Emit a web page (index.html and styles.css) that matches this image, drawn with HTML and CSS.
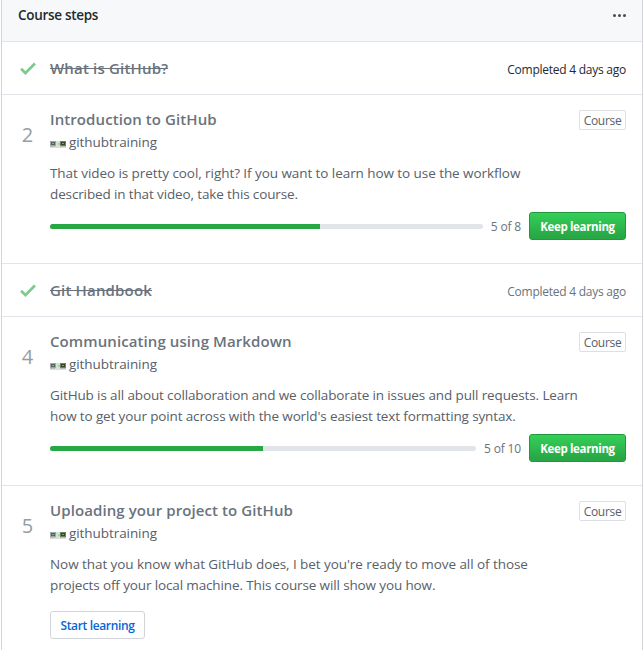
FILE: index.html
```html
<!DOCTYPE html>
<html lang="en">
<head>
<meta charset="utf-8">
<title>Course steps</title>
<link rel="stylesheet" href="styles.css">
</head>
<body>
<svg class="defs" width="0" height="0" aria-hidden="true">
  <symbol id="check" viewBox="0 0 12 16"><path fill-rule="evenodd" d="M12 5l-8 8-4-4 1.500-1.500L4 10l6.500-6.500L12 5z"/></symbol>
  <symbol id="glasses" viewBox="0 0 16 7">
    <path fill="#d9dfda" d="M0 0h16v7H0z"/>
    <path fill="#a0a6a3" d="M0 0h6v5H0z"/>
    <path fill="#59615e" d="M1 1h4v3H1z"/>
    <path fill="#99a49f" d="M2 2h2v1H2z"/>
    <path fill="#c1ebe1" d="M6 0h3v3H6z"/>
    <path fill="#acd591" d="M8 2h2v2H8z"/>
    <path fill="#71805d" d="M10 0h6v5h-6z"/>
    <path fill="#39442d" d="M11 1h4v3h-4z"/>
    <path fill="#909b78" d="M12 2h2v1h-2z"/>
    <path fill="#b8bfb8" d="M0 5h5v1H0zM10 5h6v1h-6z"/>
  </symbol>
</svg>
<main class="box">
  <header class="box-header">
    <h1 class="box-title">Course steps</h1>
    <svg class="kebab" width="13" height="3" viewBox="0 0 13 3"><circle cx="1.500" cy="1.500" r="1.500"/><circle cx="6.500" cy="1.500" r="1.500"/><circle cx="11.500" cy="1.500" r="1.500"/></svg>
  </header>

  <section class="row row-done">
    <svg class="check" width="16" height="21"><use href="#check"/></svg>
    <h2 class="title title-done">What is GitHub?</h2>
    <span class="completed completed-dark">Completed 4 days ago</span>
  </section>

  <section class="row">
    <div class="number">2</div>
    <div class="content">
      <div class="top"><h2 class="title">Introduction to GitHub</h2><span class="label">Course</span></div>
      <div class="owner"><svg class="avatar" width="16" height="7"><use href="#glasses"/></svg><span>githubtraining</span></div>
      <p class="description"><span class="loose">That video is pretty cool, right? If you want to learn how to use the workflow</span><br>described in that video, take this course.</p>
      <div class="progress-row"><div class="progress"><div class="bar" style="width:62.5%"></div></div><span class="count">5 of 8</span><button class="btn btn-primary">Keep learning</button></div>
    </div>
  </section>

  <section class="row row-done">
    <svg class="check" width="16" height="21"><use href="#check"/></svg>
    <h2 class="title title-done">Git Handbook</h2>
    <span class="completed">Completed 4 days ago</span>
  </section>

  <section class="row">
    <div class="number">4</div>
    <div class="content">
      <div class="top"><h2 class="title">Communicating using Markdown</h2><span class="label">Course</span></div>
      <div class="owner"><svg class="avatar" width="16" height="7"><use href="#glasses"/></svg><span>githubtraining</span></div>
      <p class="description">GitHub is all about collaboration and we collaborate in issues and pull requests. Learn<br>how to get your point across with the world's easiest text formatting syntax.</p>
      <div class="progress-row"><div class="progress"><div class="bar" style="width:50%"></div></div><span class="count">5 of 10</span><button class="btn btn-primary">Keep learning</button></div>
    </div>
  </section>

  <section class="row row-last">
    <div class="number">5</div>
    <div class="content">
      <div class="top"><h2 class="title">Uploading your project to GitHub</h2><span class="label">Course</span></div>
      <div class="owner"><svg class="avatar" width="16" height="7"><use href="#glasses"/></svg><span>githubtraining</span></div>
      <p class="description"><span class="loose">Now that you know what GitHub does, I bet you're ready to move all of those</span><br>projects off your local machine. This course will show you how.</p>
      <button class="btn btn-start">Start learning</button>
    </div>
  </section>
</main>
</body>
</html>
```
FILE: styles.css
```css
* { box-sizing: border-box; }
body {
  margin: 0;
  height: 650px;
  overflow: hidden;
  background: #fff;
  color: #586069;
  font: 14px/21px "Open Sans", "Noto Sans", sans-serif;
}
h1, h2, p { margin: 0; }
.defs { display: block; }
.box {
  height: 650px;
  margin-left: 1px;
  border: solid #d1d5da;
  border-width: 0 1px;
  overflow: hidden;
}
.box-header {
  display: flex;
  justify-content: space-between;
  height: 42px;
  padding: 5px 16px 0;
  background: #f6f8fa;
  border-bottom: 1px solid #e1e4e8;
}
.box-title { font-size: 13.500px; font-weight: 600; line-height: 21px; letter-spacing: -0.3px; color: #24292e; }
.kebab { margin-top: 9px; fill: #444d56; }
.row {
  display: flex;
  height: 169px;
  padding: 15px 16px 0 0;
  border-bottom: 1px solid #e1e4e8;
}
.row-done { height: 53px; }
.row-last { height: auto; border: 0; }
.check { width: 16px; margin: 1px 14px 0 18px; fill: #28a745; opacity: .6; }
.title { font-size: 15px; line-height: 18px; font-weight: 600; letter-spacing: 0.09px; color: #6a737d; white-space: nowrap; }
.title-done { flex: 1; line-height: 22px; letter-spacing: 0.17px; text-decoration: line-through; }
.completed { font-size: 12px; line-height: 21px; padding-top: 2px; letter-spacing: -0.25px; color: #6a737d; white-space: nowrap; }
.completed-dark { color: #24292e; }
.number { width: 48px; padding: 14px 0 0 3px; font-size: 20px; line-height: 22px; text-align: center; color: #959da5; }
.content { flex: 1; min-width: 0; }
.top { display: flex; justify-content: space-between; height: 22px; }
.label {
  width: 47px;
  height: 20px;
  border: 1px solid #dcdfe3;
  border-radius: 2px;
  font-size: 12px;
  line-height: 20px;
  letter-spacing: -0.3px;
  text-align: center;
}
.owner { display: flex; align-items: center; gap: 4px; height: 21px; margin-bottom: 10px; font-size: 13.500px; letter-spacing: -0.07px; }
.owner span { line-height: 19px; margin-left: -1px; }
.avatar { margin-top: 3px; }
.description { font-size: 13.500px; line-height: 21px; letter-spacing: -0.13px; white-space: nowrap; }
.loose { letter-spacing: -0.065px; }
.progress-row { display: flex; align-items: center; margin-top: 7px; }
.progress { flex: 1; height: 5px; margin-right: 8px; border-radius: 3px; background: #e1e4e8; overflow: hidden; }
.bar { height: 100%; background: #28a745; }
.count { font-size: 12px; letter-spacing: -0.17px; margin-right: 8px; color: #6a737d; }
.btn {
  height: 28px;
  padding: 1px 0 0;
  border: 1px solid #d1d5da;
  border-radius: 3px;
  font-family: "Open Sans", "Noto Sans", sans-serif;
  font-size: 12px;
  line-height: 26px;
  font-weight: 600;
  letter-spacing: -0.35px;
}
.btn-primary {
  width: 97px;
  color: #fff;
  font-size: 11.500px;
  font-weight: 700;
  border-color: #22973f;
  background: linear-gradient(#34d058, #28a745 90%);
}
.btn-start { display: block; width: 95px; margin-top: 15px; color: #0366d6; background: #fff; }
```
